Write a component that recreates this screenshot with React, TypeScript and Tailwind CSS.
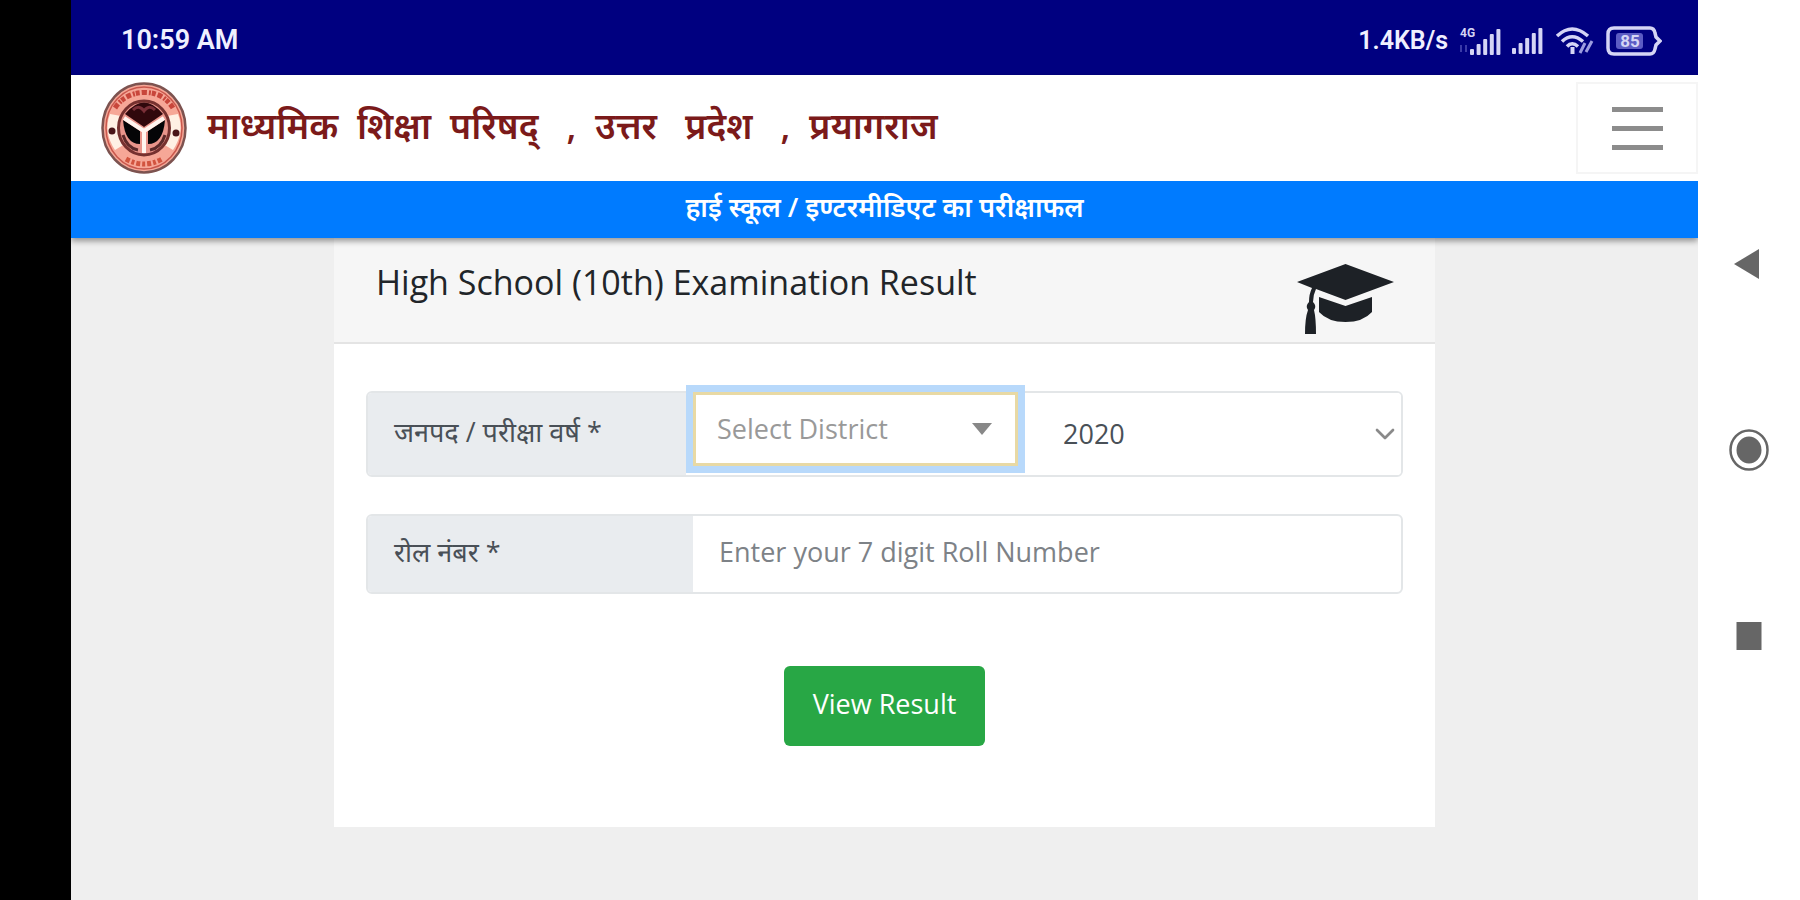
import { useState } from "react";
import { ChevronDown } from "lucide-react";

const districts = ["प्रयागराज", "लखनऊ", "वाराणसी", "कानपुर नगर"];
const years = ["2020", "2019", "2018"];

function SignalBars() {
  return (
    <svg viewBox="0 0 32 26" className="w-8 h-[26px]" aria-hidden="true">
      {[0, 1, 2, 3, 4].map((i) => (
        <rect key={i} x={i * 6.6} y={20 - i * 5} width="4" height={6 + i * 5} rx="1" fill="#d5d5f5" />
      ))}
    </svg>
  );
}

function MobileData() {
  return (
    <svg viewBox="0 0 42 28" className="w-[42px] h-7 overflow-visible" aria-hidden="true">
      <text x="1" y="10" fontSize="12" fontWeight="700" fill="#d5d5f5" fontFamily="Roboto, sans-serif">
        4G
      </text>
      <path d="M2 25v-7M7 18v7" stroke="#3a3aa8" strokeWidth="2" />
      {[0, 1, 2, 3, 4].map((i) => (
        <rect key={i} x={11 + i * 6.6} y={22 - i * 5} width="4" height={6 + i * 5} rx="1" fill="#d5d5f5" />
      ))}
    </svg>
  );
}

function Wifi() {
  return (
    <svg viewBox="0 0 40 28" className="w-10 h-7" fill="none" stroke="#d5d5f5" aria-hidden="true">
      <path d="M2 9Q17-5 33 9" strokeWidth="3.5" />
      <path d="M7 14.5Q17 5 28 14.5" strokeWidth="3.5" />
      <path d="M12 19.5Q17 14 23 19.5" strokeWidth="3.5" />
      <path d="M17.5 20v7" strokeWidth="4" />
      <path d="M25 26l5-10M31 25l6-11" stroke="#9c9ce0" strokeWidth="3" />
    </svg>
  );
}

function Battery() {
  return (
    <svg viewBox="0 0 56 30" className="w-14 h-[30px]" aria-hidden="true">
      <path d="M8 2h36q4 0 5 5l1 4 4 4-4 4-1 4q-1 5-5 5H8q-6 0-6-6V8q0-6 6-6Z" fill="none" stroke="#d5d5f5" strokeWidth="3.5" />
      <rect x="10" y="7" width="27" height="16" rx="3" fill="#5c5cc4" />
      <text x="24" y="21" textAnchor="middle" fontSize="17" fontWeight="700" fill="#d5d5f5" fontFamily="Roboto, sans-serif">
        85
      </text>
    </svg>
  );
}

function Emblem() {
  return (
    <svg viewBox="0 0 86 92" preserveAspectRatio="none" className="w-[86px] h-[92px] shrink-0" aria-hidden="true">
      <ellipse cx="43" cy="46" rx="41.5" ry="44.5" fill="#f6a797" stroke="#7d5350" strokeWidth="2.5" />
      <ellipse cx="43" cy="46" rx="38" ry="41" fill="none" stroke="#c9574c" strokeWidth="1.5" />
      {/* pale flanks of the ring */}
      <path d="M9 32Q2 50 14 68L24 62Q16 47 20 34Z" fill="#fff0e4" />
      <path d="M77 32Q84 50 72 68L62 62Q70 47 66 34Z" fill="#fff0e4" />
      <path d="M14 26Q24 11 43 10.5T72 26" fill="none" stroke="#c8463b" strokeWidth="5" strokeDasharray="5 2 2 1 4 2" />
      <path d="M25 77Q43 87 61 77" fill="none" stroke="#d2543f" strokeWidth="5" strokeDasharray="4 2 3 2" />
      <circle cx="11" cy="49" r="3.5" fill="#4a1518" />
      <circle cx="75" cy="51" r="3.5" fill="#4a1518" />
      <ellipse cx="43" cy="46" rx="25.5" ry="27" fill="#e9958b" stroke="#76312f" strokeWidth="3" />
      {/* bow, rivers and fish */}
      <path d="M24 32Q43 9 62 32L43 45Z" fill="#30080c" />
      <path d="M32 28q6-6 11 1 5-7 11-1" fill="none" stroke="#7a3038" strokeWidth="3" />
      <path d="M22 38L39 49v13q-15 0-17-24Z" fill="#050507" />
      <path d="M64 38L47 49v13q15 0 17-24Z" fill="#050507" />
      <path d="M22 53q4 13 15 15M64 53q-4 13-15 15" fill="none" stroke="#5d2a2a" strokeWidth="3" />
      <path d="M23 36L43 49 63 36M43 48v23" fill="none" stroke="#fff5ef" strokeWidth="4" />
    </svg>
  );
}

function GraduationCap() {
  return (
    <svg viewBox="0 0 97 71" className="w-[97px] h-[71px]" fill="#1d2126" aria-hidden="true">
      <path d="M48.5 0L97 18 48.5 36 19 25Q16 31 16 38q4 4 1 8 2 8 2 24H8q0-16 3-24-3-4 1-8 0-8 3-14L0 18Z" />
      <path d="M22 33L48.5 42 75 33v15q-9 10-26.5 10T22 48Z" />
    </svg>
  );
}

export default function App() {
  const [district, setDistrict] = useState("");
  const [year, setYear] = useState("2020");
  const [roll, setRoll] = useState("");

  return (
    <div className="flex min-h-screen bg-white font-['Open_Sans','Noto_Sans',sans-serif]">
      <div className="w-[71px] shrink-0 bg-black" />

      <div className="flex-1 min-w-0 flex flex-col bg-[#efefef] overflow-hidden">
        {/* Status bar */}
        <div className="flex items-center justify-between h-[75px] pt-1.5 pl-[50px] pr-9 bg-[#000080] text-[#f0f0ff] font-['Roboto',sans-serif] font-semibold">
          <span className="text-[27px]">10:59 AM</span>
          <div className="flex items-center gap-[11px]">
            <span className="text-[25px]">1.4KB/s</span>
            <MobileData />
            <SignalBars />
            <Wifi />
            <Battery />
          </div>
        </div>

        {/* Navbar */}
        <header className="relative shadow-[0_3px_6px_rgba(0,0,0,0.4)]">
          <div className="flex items-center justify-between h-[106px] pl-[30px] bg-white">
            <a href="#" className="flex items-center gap-5">
              <Emblem />
              <span className="pb-1 text-[36px] font-semibold text-[#7b1a1a] whitespace-pre">
                माध्यमिक  शिक्षा  परिषद्   ,  उत्तर   प्रदेश   ,  प्रयागराज
              </span>
            </a>
            <button
              type="button"
              aria-label="Menu"
              className="flex flex-col items-center justify-center gap-[14px] w-[122px] h-[92px] border-2 border-[#f5f5f5]"
            >
              <span className="w-[51px] h-[5px] bg-[#8c8c8c]" />
              <span className="w-[51px] h-[5px] bg-[#8c8c8c]" />
              <span className="w-[51px] h-[5px] bg-[#8c8c8c]" />
            </button>
          </div>
          <h1 className="flex items-center justify-center h-[57px] pb-1 bg-[#007bff] text-white text-[27px] font-semibold">
            हाई स्कूल / इण्टरमीडिएट का परीक्षाफल
          </h1>
        </header>

        {/* Result form */}
        <main className="w-full max-w-[1101px] mx-auto bg-white">
          <div className="flex items-start justify-between h-[106px] pt-[26px] pl-[42px] pr-[41px] bg-[#f6f6f6] border-b-2 border-[#e4e4e4]">
            <h2 className="text-[34px] leading-9 text-[#212529]">High School (10th) Examination Result</h2>
            <GraduationCap />
          </div>

          <form className="flex flex-col px-8 pt-[47px] pb-[81px]" onSubmit={(e) => e.preventDefault()}>
            <div className="flex h-[86px] rounded-md border-2 border-[#e3e6e8]">
              <label
                htmlFor="district"
                className="flex items-center w-[318px] shrink-0 pl-[26px] pb-1 rounded-l-sm bg-[#e9ecef] text-[27px] text-[#495057]"
              >
                जनपद / परीक्षा वर्ष *
              </label>
              <div className="grid self-start w-[339px] shrink-0 -mt-2 p-[7px] bg-[#b8d9fb]">
                <select
                  id="district"
                  value={district}
                  onChange={(e) => setDistrict(e.target.value)}
                  className="col-start-1 row-start-1 appearance-none w-full h-[74px] pl-[21px] bg-white border-3 border-[#e8d9a4] text-[27px] text-[#999999] outline-none"
                >
                  <option value="">Select District</option>
                  {districts.map((d) => (
                    <option key={d}>{d}</option>
                  ))}
                </select>
                <svg viewBox="0 0 20 12" className="col-start-1 row-start-1 self-center justify-self-end mr-[26px] w-5 h-3 pointer-events-none" aria-hidden="true">
                  <path d="M0 0h20L10 12Z" fill="#888888" />
                </svg>
              </div>
              <div className="grid flex-1 items-center">
                <select
                  aria-label="परीक्षा वर्ष"
                  value={year}
                  onChange={(e) => setYear(e.target.value)}
                  className="col-start-1 row-start-1 appearance-none w-full h-full pl-[38px] bg-white rounded-r-sm text-[27px] text-[#495057] outline-none"
                >
                  {years.map((y) => (
                    <option key={y}>{y}</option>
                  ))}
                </select>
                <ChevronDown size={32} strokeWidth={2} className="col-start-1 row-start-1 justify-self-end text-[#8a8a8a] pointer-events-none" />
              </div>
            </div>

            <div className="flex h-20 mt-[37px] rounded-md border-2 border-[#e3e6e8]">
              <label
                htmlFor="roll"
                className="flex items-center w-[325px] shrink-0 pl-[26px] pb-1 rounded-l-sm bg-[#e9ecef] text-[27px] text-[#495057]"
              >
                रोल नंबर *
              </label>
              <input
                id="roll"
                type="text"
                value={roll}
                onChange={(e) => setRoll(e.target.value)}
                placeholder="Enter your 7 digit Roll Number"
                className="flex-1 min-w-0 px-[26px] pb-1 rounded-r-sm text-[27px] text-[#495057] placeholder:text-[#7d8287] outline-none"
              />
            </div>

            <button
              type="submit"
              className="self-center w-[201px] h-20 mt-[72px] pb-1 rounded-md bg-[#28a745] text-white text-[27px]"
            >
              View Result
            </button>
          </form>
        </main>
      </div>

      {/* System navigation */}
      <nav className="flex flex-col items-center justify-center gap-36 w-[102px] shrink-0">
        <button type="button" aria-label="Back">
          <svg viewBox="0 0 42 42" className="w-[42px] h-[42px]">
            <path d="M6 21L31 6v30Z" fill="#666666" />
          </svg>
        </button>
        <button type="button" aria-label="Home">
          <svg viewBox="0 0 42 42" className="w-[42px] h-[42px]">
            <ellipse cx="21" cy="21" rx="18.5" ry="19.5" fill="none" stroke="#666666" strokeWidth="2.5" />
            <ellipse cx="21" cy="21" rx="12.5" ry="13.5" fill="#666666" />
          </svg>
        </button>
        <button type="button" aria-label="Recent apps">
          <svg viewBox="0 0 42 42" className="w-[42px] h-[42px]">
            <rect x="8.5" y="7" width="25" height="28" fill="#666666" />
          </svg>
        </button>
      </nav>
    </div>
  );
}
